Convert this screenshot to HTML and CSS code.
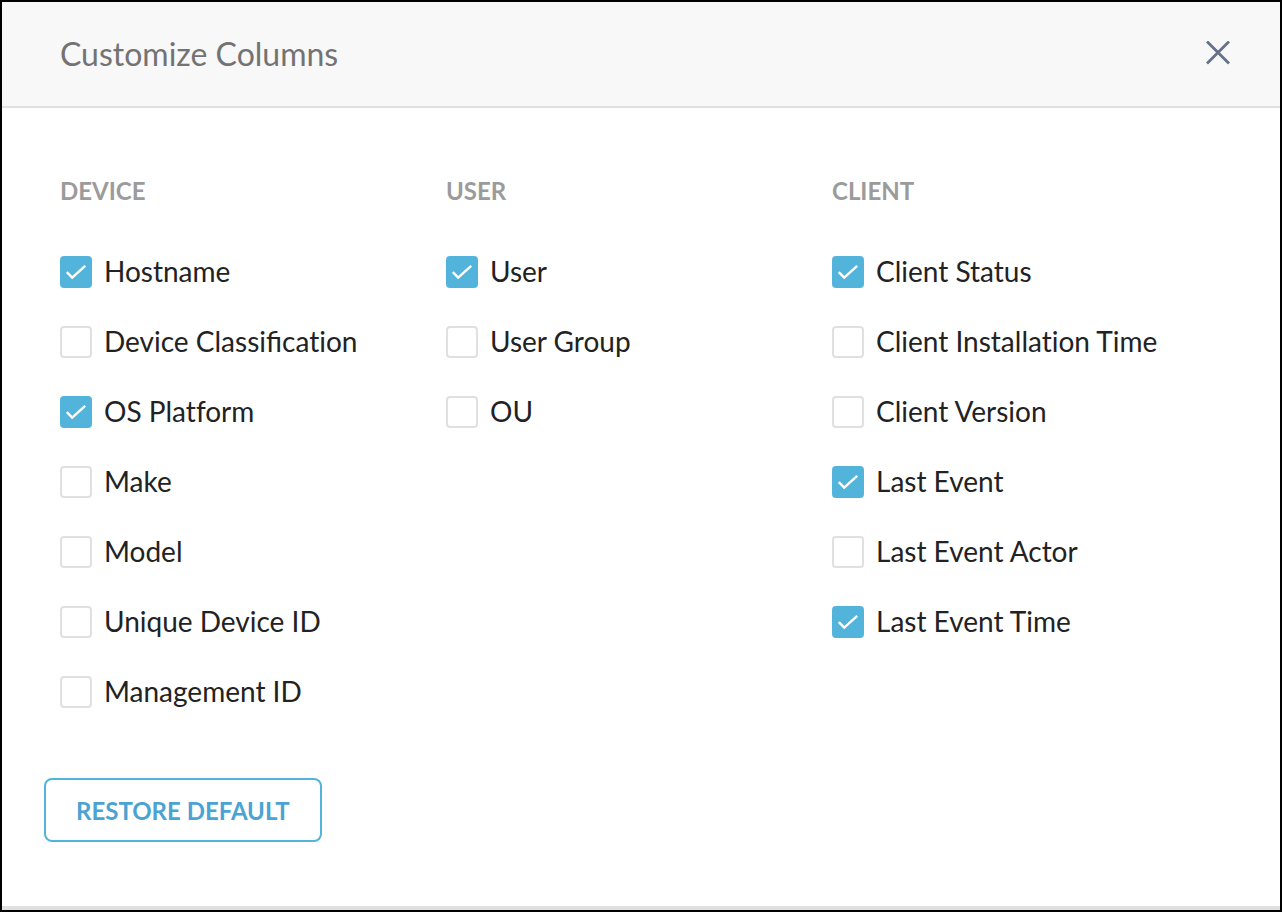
FILE: index.html
```html
<!DOCTYPE html>
<html lang="en">
<head>
<meta charset="utf-8">
<meta name="viewport" content="width=device-width, initial-scale=1">
<title>Customize Columns</title>
<link rel="stylesheet" href="styles.css">
</head>
<body>
<svg class="sprite" aria-hidden="true">
  <symbol id="check" viewBox="0 0 32 32"><path d="M6.8 16.2l5.4 5.4L25.2 9.8" fill="none" stroke="currentColor" stroke-width="2.4"/></symbol>
</svg>
<main class="dialog">
  <header class="dialog-header">
    <h1 class="dialog-title">Customize Columns</h1>
    <button class="close" type="button" aria-label="Close">
      <svg class="close-icon" viewBox="0 0 24 24" aria-hidden="true"><path d="M1 .5l22 22M23 .5L1 22.5" fill="none" stroke="currentColor" stroke-width="2.8"/></svg>
    </button>
  </header>
  <form class="dialog-body">
    <div class="groups">
      <section class="group">
        <h2 class="group-title">DEVICE</h2>
        <div class="options">
          <label class="option"><span class="box"><input class="tick" type="checkbox" checked><svg class="mark"><use href="#check"/></svg></span>Hostname</label>
          <label class="option"><span class="box"><input class="tick" type="checkbox"><svg class="mark"><use href="#check"/></svg></span><span>Device Classi<span class="joined">fi</span>cation</span></label>
          <label class="option"><span class="box"><input class="tick" type="checkbox" checked><svg class="mark"><use href="#check"/></svg></span>OS Platform</label>
          <label class="option"><span class="box"><input class="tick" type="checkbox"><svg class="mark"><use href="#check"/></svg></span>Make</label>
          <label class="option"><span class="box"><input class="tick" type="checkbox"><svg class="mark"><use href="#check"/></svg></span>Model</label>
          <label class="option"><span class="box"><input class="tick" type="checkbox"><svg class="mark"><use href="#check"/></svg></span>Unique Device ID</label>
          <label class="option"><span class="box"><input class="tick" type="checkbox"><svg class="mark"><use href="#check"/></svg></span>Management ID</label>
        </div>
      </section>
      <section class="group">
        <h2 class="group-title">USER</h2>
        <div class="options">
          <label class="option"><span class="box"><input class="tick" type="checkbox" checked><svg class="mark"><use href="#check"/></svg></span>User</label>
          <label class="option"><span class="box"><input class="tick" type="checkbox"><svg class="mark"><use href="#check"/></svg></span>User Group</label>
          <label class="option"><span class="box"><input class="tick" type="checkbox"><svg class="mark"><use href="#check"/></svg></span>OU</label>
        </div>
      </section>
      <section class="group">
        <h2 class="group-title">CLIENT</h2>
        <div class="options">
          <label class="option"><span class="box"><input class="tick" type="checkbox" checked><svg class="mark"><use href="#check"/></svg></span>Client Status</label>
          <label class="option"><span class="box"><input class="tick" type="checkbox"><svg class="mark"><use href="#check"/></svg></span>Client Installation Time</label>
          <label class="option"><span class="box"><input class="tick" type="checkbox"><svg class="mark"><use href="#check"/></svg></span>Client Version</label>
          <label class="option"><span class="box"><input class="tick" type="checkbox" checked><svg class="mark"><use href="#check"/></svg></span>Last Event</label>
          <label class="option"><span class="box"><input class="tick" type="checkbox"><svg class="mark"><use href="#check"/></svg></span>Last Event Actor</label>
          <label class="option"><span class="box"><input class="tick" type="checkbox" checked><svg class="mark"><use href="#check"/></svg></span>Last Event Time</label>
        </div>
      </section>
    </div>
    <button class="restore" type="reset">RESTORE DEFAULT</button>
  </form>
  <div class="dialog-edge"></div>
</main>
</body>
</html>
```

FILE: styles.css
```css
* {
  box-sizing: border-box;
}

body {
  margin: 0;
  font-family: Lato, "Liberation Sans", sans-serif;
  color: #222;
  background: #fff;
}

.sprite {
  display: none;
}

.dialog {
  display: flex;
  flex-direction: column;
  min-height: 100vh;
  border: 2px solid #000;
}

.dialog-header {
  display: flex;
  align-items: center;
  justify-content: space-between;
  padding: 28px 50px 28px 58px;
  background: #f8f8f8;
  border-bottom: 2px solid #e0e0e0;
}

.dialog-title {
  margin: 0;
  font-size: 32px;
  line-height: 48px;
  font-weight: 400;
  color: #737373;
}

.close {
  display: flex;
  padding: 0 0 2px;
  border: 0;
  background: none;
  color: #637286;
  cursor: pointer;
}

.close-icon {
  width: 24px;
  height: 24px;
}

.dialog-body {
  flex: 1;
  padding: 67px 62px 64px 42px;
}

.groups {
  display: grid;
  grid-template-columns: repeat(3, 1fr);
  padding-left: 16px;
}

.group-title {
  margin: 0 0 49px;
  font-size: 24px;
  line-height: 32px;
  font-weight: 700;
  color: #9b9b9b;
}

.options {
  display: flex;
  flex-direction: column;
  gap: 38px;
}

.option {
  display: flex;
  align-items: flex-start;
  gap: 12px;
  font-size: 28px;
  line-height: 30px;
  font-variant-ligatures: none;
  cursor: pointer;
}

.joined {
  font-variant-ligatures: common-ligatures;
}

.box {
  display: grid;
  flex: none;
}

.tick,
.mark {
  grid-area: 1 / 1;
  width: 32px;
  height: 32px;
}

.tick {
  appearance: none;
  margin: 0;
  border: 2px solid #e0e0e0;
  border-radius: 4px;
  background: #fff;
}

.tick:checked {
  border-color: #53b4db;
  background: #53b4db;
}

.mark {
  color: #fff;
  pointer-events: none;
  visibility: hidden;
}

.tick:checked + .mark {
  visibility: visible;
}

.restore {
  margin-top: 70px;
  padding: 15px 30px 13px;
  border: 2px solid #53b4db;
  border-radius: 8px;
  background: #fff;
  font-family: inherit;
  font-size: 24px;
  line-height: 32px;
  font-weight: 700;
  color: #4ba3d3;
  cursor: pointer;
}

.dialog-edge {
  height: 4px;
  background: #e0e0e0;
}
```
